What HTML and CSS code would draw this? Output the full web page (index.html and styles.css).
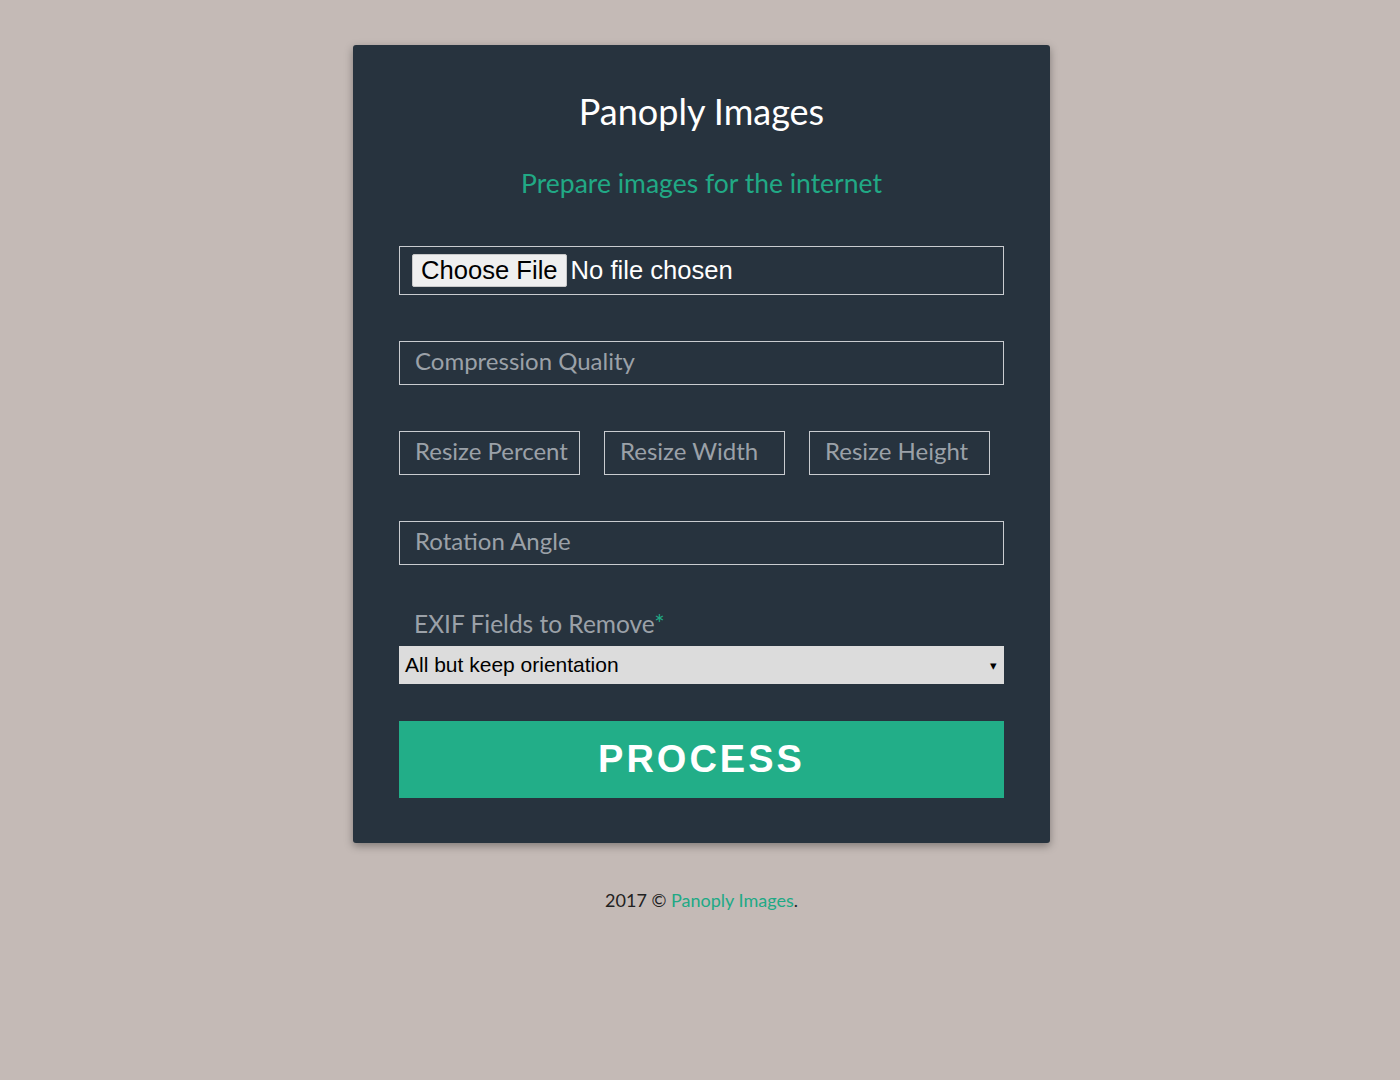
FILE: index.html
```html
<!DOCTYPE html>
<html>
<head>
<meta charset="utf-8">
<title>Panoply Images</title>
<link rel="stylesheet" href="styles.css">
</head>
<body>
<div class="page">
  <form class="card">
    <h1 class="title">Panoply Images</h1>
    <p class="subtitle">Prepare images for the internet</p>
    <div class="file-box"><input class="file" type="file"></div>
    <input class="field" type="text" placeholder="Compression Quality">
    <div class="row">
      <input class="field small" type="text" placeholder="Resize Percent">
      <input class="field small" type="text" placeholder="Resize Width">
      <input class="field small" type="text" placeholder="Resize Height">
    </div>
    <input class="field" type="text" placeholder="Rotation Angle">
    <div class="label">EXIF Fields to Remove<span class="req">*</span></div>
    <div class="select"><span>All but keep orientation</span><span class="arrow">▾</span></div>
    <button class="process" type="button">PROCESS</button>
  </form>
  <p class="footer">2017 © <a href="#">Panoply Images</a>.</p>
</div>
</body>
</html>
```
FILE: styles.css
```css
html, body {
  margin: 0;
  padding: 0;
  background: #c4bab6;
  font-family: Lato, "Noto Sans", sans-serif;
}
.page {
  display: flex;
  flex-direction: column;
  align-items: center;
  padding: 45px 0 0 3px;
}
.card {
  width: 697px;
  box-sizing: border-box;
  padding: 44px 46px 45px 46px;
  background: #27333e;
  border-radius: 3px;
  box-shadow: 0 3px 8px rgba(0, 0, 0, 0.35);
  display: flex;
  flex-direction: column;
}
.title {
  margin: 0;
  font-weight: 400;
  font-size: 36px;
  line-height: 44px;
  color: #ffffff;
  text-align: center;
}
.subtitle {
  margin: 32px 0 0;
  font-size: 26.5px;
  line-height: 36px;
  color: #21a985;
  text-align: center;
}
.file-box {
  margin-top: 45px;
  height: 49px;
  box-sizing: border-box;
  border: 1px solid #c9ccd0;
  display: flex;
  align-items: center;
  padding-left: 12px;
}
.file {
  font-family: "Liberation Sans", Arial, sans-serif;
  font-size: 25.6px;
  color: #ffffff;
}
.file::file-selector-button {
  font-family: "Liberation Sans", Arial, sans-serif;
  font-size: 25.6px;
  background: #efefef;
  color: #000;
  border: 1px solid #c8c8c8;
  border-radius: 2px;
  padding: 1px 8px;
  margin-right: 4px;
}
.field {
  margin-top: 46px;
  height: 44px;
  box-sizing: border-box;
  border: 1px solid #c9ccd0;
  background: transparent;
  padding: 0 0 6px 15px;
  font-family: Lato, "Noto Sans", sans-serif;
  font-size: 24px;
  color: #9ba1a8;
  outline: none;
}
.field::placeholder { color: #9ba1a8; }
.row {
  display: flex;
  gap: 24px;
  margin-top: 46px;
}
.row .field {
  margin-top: 0;
  width: 181px;
}
.label {
  margin-top: 45px;
  padding-left: 15px;
  font-size: 24.5px;
  line-height: 28px;
  color: #9ba1a8;
}
.req { color: #21a985; }
.select {
  margin-top: 8px;
  height: 38px;
  background: #dcdcdc;
  display: flex;
  align-items: center;
  justify-content: space-between;
  padding: 0 7px 0 6px;
  font-family: "Liberation Sans", Arial, sans-serif;
  font-size: 21px;
  color: #000;
}
.arrow { font-size: 13px; }
.process {
  margin-top: 37px;
  height: 77px;
  border: none;
  background: #22ae88;
  color: #ffffff;
  font-family: "Liberation Sans", Arial, sans-serif;
  font-weight: 700;
  font-size: 38px;
  letter-spacing: 3px;
  cursor: pointer;
}
.footer {
  margin: 45px 0 0;
  font-size: 18px;
  line-height: 24px;
  color: #222;
}
.footer a {
  color: #21a985;
  text-decoration: none;
}
```
